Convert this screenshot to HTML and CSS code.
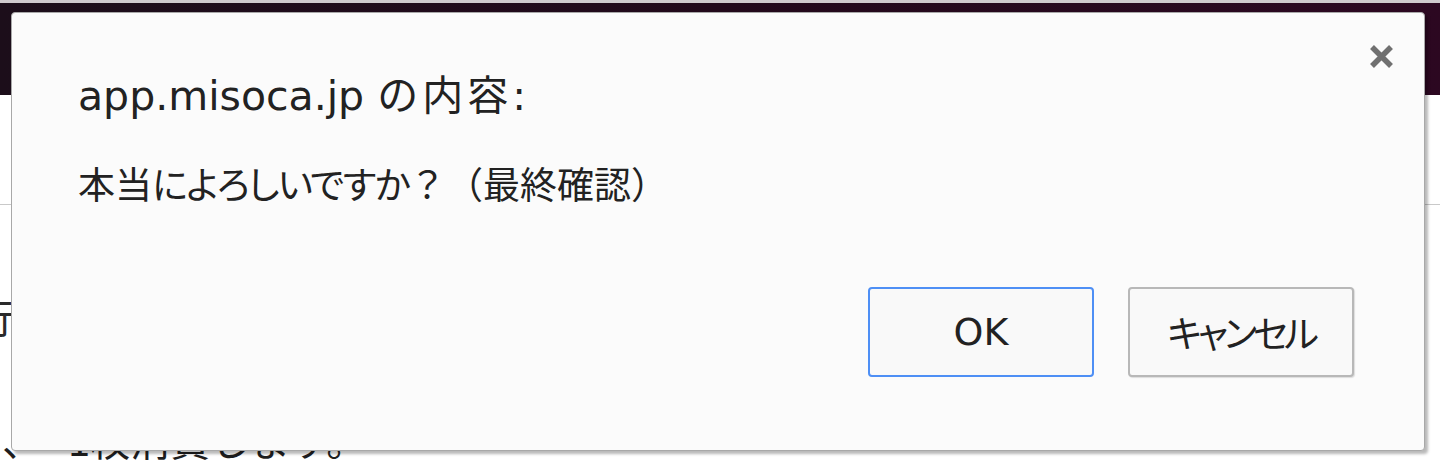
FILE: index.html
```html
<!DOCTYPE html>
<html lang="ja">
<head>
<meta charset="utf-8">
<title>app.misoca.jp の内容</title>
<link rel="stylesheet" href="styles.css">
</head>
<body>
  <div class="page">
    <div class="topline"></div>
    <header class="appbar"></header>
    <div class="subnav"></div>
    <main class="page-main">
      <p class="bg-line bg-kanji">請求書の発行</p>
      <p class="bg-line bg-link">リンク：</p>
      <p class="bg-line bg-note"><span class="bg-mark">、</span><span>1枚消費します。</span></p>
    </main>
  </div>

  <div class="dialog" role="dialog" aria-labelledby="dlg-title">
    <div class="dialog-head">
      <h1 class="dialog-title" id="dlg-title">app.misoca.jp <span class="title-jp">の内容:</span></h1>
      <button class="dialog-close" type="button" aria-label="閉じる">
        <svg viewBox="0 0 27 27" width="27" height="27" aria-hidden="true">
          <path d="M4 4 L23 23 M23 4 L4 23" />
        </svg>
      </button>
    </div>
    <p class="dialog-message">本当<span class="kana">によろしいですか</span>？（最終確認）</p>
    <div class="dialog-actions">
      <button class="btn btn-primary" type="button">OK</button>
      <button class="btn btn-cancel" type="button">キャンセル</button>
    </div>
  </div>
</body>
</html>
```

FILE: styles.css
```css
html, body {
  margin: 0;
  padding: 0;
  height: 100%;
  overflow: hidden;
  background: #ffffff;
}

body {
  font-family: "DejaVu Sans", "Noto Sans CJK JP", sans-serif;
  color: #222222;
}

/* ---------- page behind the dialog ---------- */
.page {
  display: flex;
  flex-direction: column;
}

.topline {
  height: 3px;
  background: #cfcacd;
}

.appbar {
  height: 92px;
  background: linear-gradient(90deg, #1c0e1a 0%, #22091b 50%, #2c0821 100%);
}

.subnav {
  height: 110px;
  border-bottom: 1px solid #c9c9c9;
  box-sizing: border-box;
}

.page-main {
  display: flex;
  flex-direction: column;
}

.bg-line {
  margin: 0;
  font-family: "Noto Sans CJK JP", sans-serif;
  font-size: 40px;
  line-height: 50px;
  color: #2a2a2a;
  white-space: nowrap;
}

.bg-kanji {
  margin-top: 86px;
  margin-left: -226px;
}

.bg-link {
  margin-top: 52px;
  margin-left: -150px;
  color: #2a6fc9;
}

.bg-note {
  margin-top: -29px;
  margin-left: 2px;
  display: flex;
  gap: 26px;
  color: #1e1e1e;
}

/* ---------- dialog ---------- */
.dialog {
  position: absolute;
  left: 11px;
  top: 12px;
  width: 1414px;
  height: 439px;
  box-sizing: border-box;
  background: #fbfbfb;
  border: 1px solid #a8a8a8;
  border-radius: 4px;
  box-shadow: 3px 3px 3px rgba(0, 0, 0, 0.28);
  padding: 30px 29px 73px 66px;
  display: flex;
  flex-direction: column;
}

.dialog-head {
  display: flex;
  justify-content: space-between;
  align-items: flex-start;
}

.dialog-title {
  margin: 28px 0 0 0;
  font-weight: normal;
  font-size: 41px;
  line-height: 50px;
  color: #222222;
}

.title-jp {
  letter-spacing: 4px;
}

.dialog-close {
  width: 27px;
  height: 27px;
  padding: 0;
  border: 0;
  background: transparent;
  display: flex;
}

.dialog-close svg path {
  stroke: #707070;
  stroke-width: 5.5;
  fill: none;
}

.dialog-message {
  margin: 37px 0 0 0;
  font-family: "Noto Sans CJK JP", sans-serif;
  font-size: 37px;
  line-height: 50px;
  color: #222222;
}

.kana {
  font-feature-settings: "palt" 1;
  letter-spacing: -1.5px;
}

.dialog-actions {
  margin-top: auto;
  margin-right: 41px;
  display: flex;
  justify-content: flex-end;
  gap: 34px;
}

.btn {
  width: 226px;
  height: 90px;
  box-sizing: border-box;
  border-radius: 4px;
  background: #f9f9f9;
  color: #222222;
  display: flex;
  align-items: center;
  justify-content: center;
  padding: 0;
}

.btn-primary {
  border: 2px solid #4e8ff5;
  font-family: "DejaVu Sans", sans-serif;
  font-size: 38px;
}

.btn-cancel {
  border: 2px solid #b8b8b8;
  box-shadow: 1px 1px 1px rgba(0, 0, 0, 0.12);
  font-family: "Noto Sans CJK JP", sans-serif;
  font-feature-settings: "palt" 1;
  font-size: 37px;
  letter-spacing: -4px;
}
```
